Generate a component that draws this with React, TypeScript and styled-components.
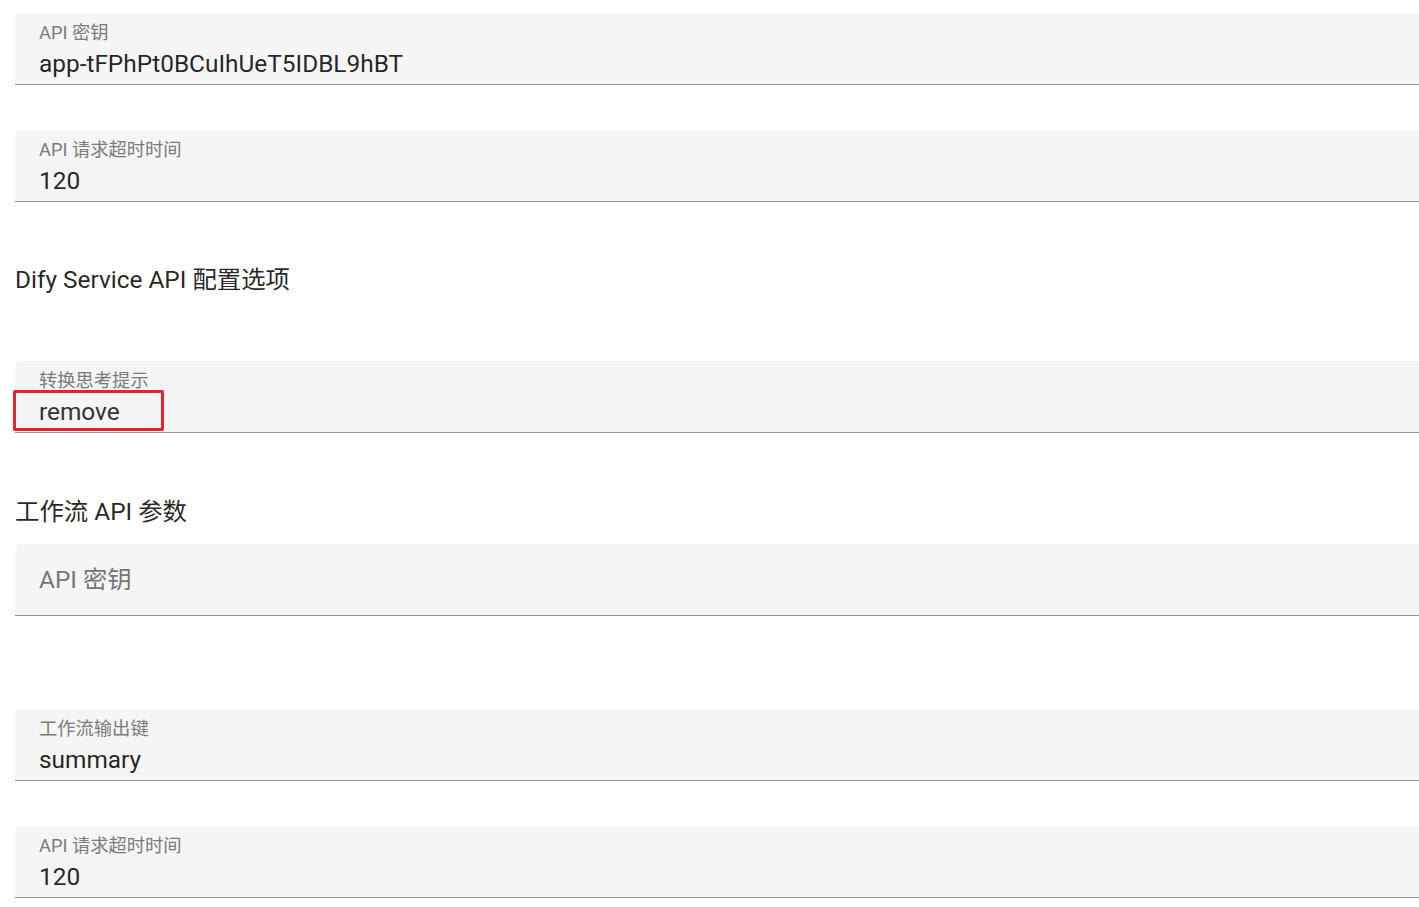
import React from 'react';
import styled, { createGlobalStyle } from 'styled-components';

const GlobalStyle = createGlobalStyle`
    html, body {
        margin: 0;
        padding: 0;
        background: #ffffff;
        overflow: hidden;
    }

    body {
        font-family: Roboto, "Noto Sans CJK SC", "Liberation Sans", sans-serif;
        color: rgba(0, 0, 0, 0.87);
    }
`;

const Page = styled.main`
    width: 1440px;
    padding: 13px 0 0 15px;
    display: flex;
    flex-direction: column;
`;

/* Filled text field, Material style */
const Field = styled.div<{ $gap?: number }>`
    position: relative;
    box-sizing: border-box;
    height: 72px;
    margin-bottom: ${({ $gap }) => ($gap ?? 45)}px;
    padding: 11px 24px 0;
    background: #f5f5f5;
    border-radius: 6px 6px 0 0;
    border-bottom: 1px solid #949494;
    display: flex;
    flex-direction: column;
`;

const Label = styled.label`
    font-size: 18.3px;
    line-height: 18px;
    color: #7b7b7b;
    white-space: nowrap;
`;

const Value = styled.div<{ $muted?: boolean }>`
    margin-top: 10px;
    font-size: 24.4px;
    line-height: 24px;
    color: ${({ $muted }) => ($muted ? '#333333' : 'rgba(0, 0, 0, 0.87)')};
    white-space: nowrap;
`;

const Placeholder = styled.div`
    margin-top: 13px;
    font-size: 24.4px;
    line-height: 24px;
    color: #767676;
`;

const Heading = styled.h2<{ $top: number; $bottom: number }>`
    margin: ${({ $top }) => $top}px 0 ${({ $bottom }) => $bottom}px;
    font-size: 24.4px;
    line-height: 24px;
    font-weight: 400;
    color: rgba(0, 0, 0, 0.87);
`;

// annotation frame drawn over the select value
const Highlight = styled.span`
    position: absolute;
    left: -2px;
    top: 29px;
    width: 151px;
    height: 41px;
    box-sizing: border-box;
    border: 3px solid #e8212e;
    border-radius: 2px;
    pointer-events: none;
`;

interface TextFieldProps {
    label: string;
    value?: string;
    gap?: number;
    muted?: boolean;
    marked?: boolean;
}

const TextField = ({ label, value, gap, muted, marked }: TextFieldProps) => (
    <Field $gap={gap}>
        {value === undefined ? (
            <Placeholder>{label}</Placeholder>
        ) : (
            <>
                <Label>{label}</Label>
                <Value $muted={muted}>{value}</Value>
            </>
        )}
        {marked && <Highlight />}
    </Field>
);

export default function App() {
    return (
        <>
            <GlobalStyle />
            <Page>
                <TextField label="API 密钥" value="app-tFPhPt0BCuIhUeT5IDBL9hBT" />
                <TextField label="API 请求超时时间" value="120" gap={0} />

                <Heading $top={66} $bottom={69}>
                    Dify Service API 配置选项
                </Heading>
                <TextField label="转换思考提示" value="remove" muted marked gap={0} />

                <Heading $top={67} $bottom={20}>
                    工作流 API 参数
                </Heading>
                <TextField label="API 密钥" gap={93} />
                <TextField label="工作流输出键" value="summary" />
                <TextField label="API 请求超时时间" value="120" />
            </Page>
        </>
    );
}
